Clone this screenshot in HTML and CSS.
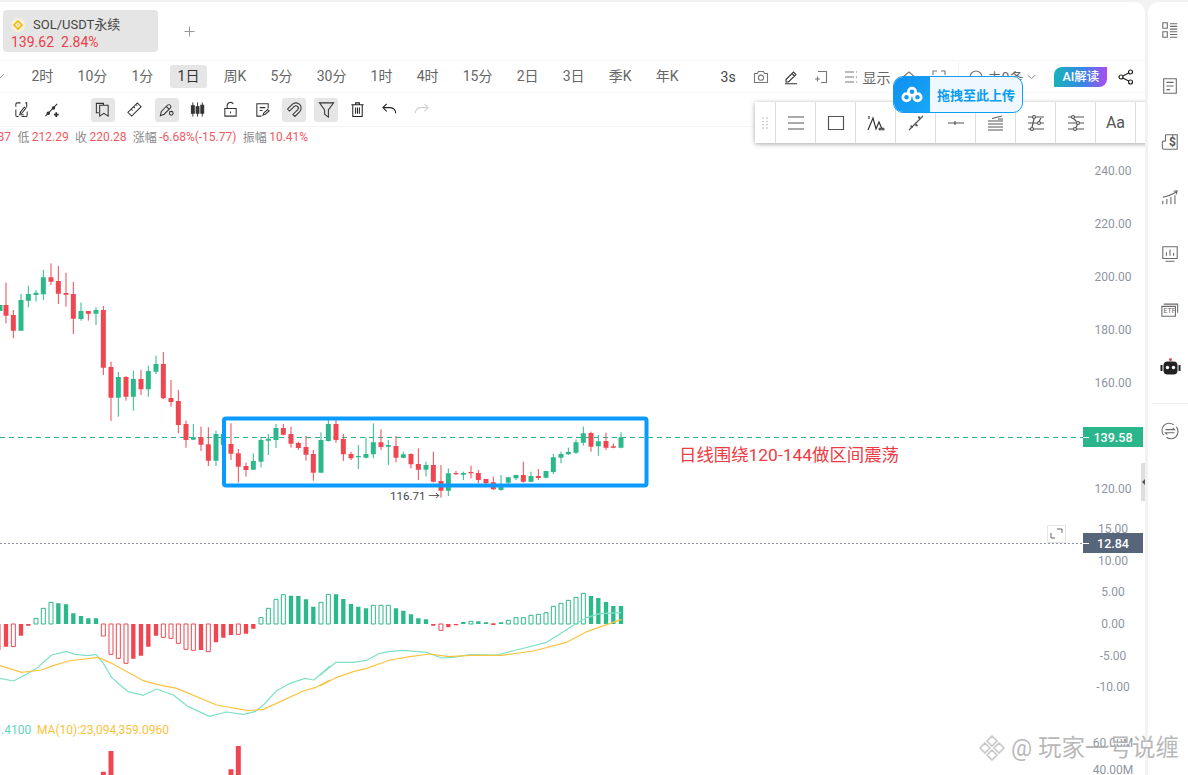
FILE: index.html
```html
<!DOCTYPE html>
<html lang="zh">
<head>
<meta charset="utf-8">
<title>SOL/USDT永续</title>
<link rel="stylesheet" href="styles.css">
</head>
<body>
<main class="main">
  <header class="tabs">
    <div class="tab">
      <div class="tab-name">
        <svg class="coin" viewBox="0 0 14 14"><circle cx="7" cy="7" r="7" fill="#f7f1dc"/><path d="M7 3 11 7 7 11 3 7z" fill="none" stroke="#f0b90b" stroke-width="1.6"/><path d="M7 6 8 7 7 8 6 7z" fill="#f0b90b"/></svg>
        <span>SOL/USDT永续</span>
      </div>
      <div class="tab-price"><span>139.62</span><span>2.84%</span></div>
    </div>
    <svg class="plus" viewBox="0 0 12 12"><path d="M6 .5v11M.5 6h11"/></svg>
  </header>

  <nav class="periods">
    <svg class="chev-left" viewBox="0 0 5 8"><path d="M-3 2 0 5 4 1"/></svg>
    <ul class="period-list">
      <li>2时</li><li>10分</li><li>1分</li><li class="on">1日</li><li>周K</li><li>5分</li><li>30分</li><li>1时</li><li>4时</li><li>15分</li><li>2日</li><li>3日</li><li>季K</li><li>年K</li>
    </ul>
    <div class="period-tools">
      <span class="sec">3s</span>
      <svg class="pi" viewBox="0 0 16 16"><path d="M1.5 4.5h3l1-2h5l1 2h3v9h-13z"/><circle cx="8" cy="8.7" r="2.6"/></svg>
      <svg class="pi dark" viewBox="0 0 16 16"><path d="M3 10.5 10.5 3l2.5 2.5L5.5 13H3zM9 4.5 11.5 7M2 14.8h12"/></svg>
      <svg class="pi" viewBox="0 0 16 16"><path d="M5 2.5h8.5v11H8M2 10h5M4.500 7.500v5"/></svg>
      <span class="show"><svg class="pi" viewBox="0 0 16 16"><path d="M2 3h9M2 8h9M2 13h9M13 3h1M13 8h1M13 13h1"/></svg><span>显示</span></span>
      <svg class="pi gap-a" viewBox="0 0 16 16"><path d="M2 8 8 3l6 5-6 5z"/></svg>
      <svg class="pi gap-b" viewBox="0 0 16 16"><path d="M2 6V2h4M10 2h4v4"/></svg>
      <span class="vsep"></span>
      <span class="alert"><svg class="pi" viewBox="0 0 16 16"><circle cx="8" cy="8" r="6"/></svg><span>未0条</span><svg class="chev" viewBox="0 0 10 6"><path d="M1 1l4 4 4-4"/></svg></span>
      <span class="ai">AI解读</span>
      <svg class="share" viewBox="0 0 16 16"><circle cx="12.500" cy="3" r="2"/><circle cx="3" cy="8" r="2"/><circle cx="12.500" cy="13" r="2"/><path d="M4.800 7 10.700 4M4.800 9l5.900 3"/></svg>
    </div>
  </nav>

  <div class="drawbar">
    <span class="dt"><svg viewBox="0 0 18 18"><path d="M3 6V3.500A1.500 1.500 0 0 1 4.500 2H8M3 9v6a1.500 1.500 0 0 0 1.500 1.500H6M13 2h1.500v5M15 11v4a1.500 1.500 0 0 1-1.500 1.500H9M8 11.500 12 6.500l1.500 1.200-4 5-2 .5zM6.500 14.500h5"/></svg></span>
    <span class="dt"><svg viewBox="0 0 18 18"><path d="M1.500 16 14 3"/><circle cx="4.500" cy="13" r="1.300" fill="#333"/><circle cx="10" cy="7.500" r="1.300" fill="#333"/><path d="M10.500 14.500h5M13 12v5" stroke-width="1.800"/></svg></span>
    <span class="dt push on"><svg viewBox="0 0 18 18"><path d="M5 12.500H2.500V2.500H10V4M6 4.500h9v11.500l-4.500-3L6 16z"/></svg></span>
    <span class="dt"><svg viewBox="0 0 18 18"><path d="M2 12 12 2l4 4L6 16zM5.500 8.500l1.500 1.500M8 6l1.500 1.500M10.500 3.500 12 5"/></svg></span>
    <span class="dt on"><svg viewBox="0 0 18 18"><path d="M2.500 15.500 3.500 11 10 4.500a2 2 0 0 1 3 3L6.500 14zM9 6l2.500 2.500"/><circle cx="14" cy="13" r="2"/></svg></span>
    <span class="dt"><svg viewBox="0 0 18 18"><path d="M3 1.500v15M8 1.500v15M13 1.500v15" stroke-width="1"/><path d="M1.500 5h3v8h-3zM6.500 6h3v7h-3zM11.500 4.500h3v8.500h-3z" fill="#333"/></svg></span>
    <span class="dt"><svg viewBox="0 0 18 18"><path d="M3 8h12v8H3zM5.500 8V5a3.500 3.500 0 0 1 6.500-1.800M9 11v2"/></svg></span>
    <span class="dt"><svg viewBox="0 0 18 18"><path d="M15 8V3H3v13h5M6 7h6M6 10h3M9.500 15l1-2.500 4-3.500 1.500 1.500-4 3.500z"/></svg></span>
    <span class="dt on"><svg viewBox="0 0 18 18"><path d="M1.600 8.600 6.600 3.600A5.500 5.500 0 0 1 14.400 11.400L9.400 16.400 7.300 14.300 12.300 9.300A2.500 2.500 0 0 0 8.700 5.700L3.700 10.700z"/></svg></span>
    <span class="dt on"><svg viewBox="0 0 18 18"><path d="M1.500 2h15L11 9.500V17l-4-3V9.500z"/></svg></span>
    <span class="dt"><svg viewBox="0 0 18 18"><path d="M2.500 4h13M7 4V2h4v2M4 4v12.500h10V4M7 7v6.500M9 7v6.500M11 7v6.500" stroke="#222"/></svg></span>
    <span class="dt"><svg viewBox="0 0 18 18"><path d="M6 3 2 7l4 4M2 7h8a5.500 5.500 0 0 1 5.500 6" stroke="#222"/></svg></span>
    <span class="dt"><svg viewBox="0 0 18 18"><path d="M12 3l4 4-4 4M16 7H8a5.500 5.500 0 0 0-5.500 6" stroke="#d0d0d0"/></svg></span>
  </div>

  <div class="ohlc">
    <span class="r">87</span><span>低</span><span class="r">212.29</span><span>收</span><span class="r">220.28</span><span>涨幅</span><span class="r">-6.68%(-15.77)</span><span>振幅</span><span class="r">10.41%</span>
  </div>

  <section class="chart">
    <svg class="plot" viewBox="0 146 1145 629">
      <path class="dash" d="M0 437.500H1083"/>
      <path class="dots" d="M0 543.500H1083"/>
      <g transform="translate(0 250) scale(.33333)">
        <path class="wick up" d="M63 132V242M85 107V172M108 120V155M130 60V150M243 158V212M288 172V225M355 366V500M400 362V482M445 347V440M468 317V372M580 522V570M648 542V648M670 545V600M760 610V659M783 560V652M805 553V615M828 522V594M963 547V668M985 510V575"/>
        <path class="body up" d="M0 165V183M63 150V242M85 132V152M108 128V135M130 82V133M243 183V207M288 180V191M355 381V443M400 387V440M445 363V418M468 342V365M580 562V569M648 552V632M670 552V585M760 633V659M783 570V635M805 566V572M828 534V570M963 570V668M985 522V573"/>
        <path class="wick dn" d="M18 98V220M40 180V265M153 40V105M175 48V162M198 68V170M220 96V252M265 183V212M310 168V375M333 335V513M378 378V452M423 360V435M490 306V447M513 390V470M535 420V550M558 512V593M603 530V603M625 532V648M693 520V630M715 597V698M738 638V680M850 522V556M873 530V593M895 575V600M918 558V632M940 600V692"/>
        <path class="body dn" d="M18 165V197M40 195V242M153 82V95M175 93V131M198 129V134M220 132V206M265 183V191M310 180V353M333 351V443M378 381V440M423 387V418M490 342V445M513 444V456M535 453V525M558 522V570M603 562V584M625 583V632M693 582V611M715 610V650M738 648V660M850 534V554M873 552V581M895 579V594M918 591V614M940 612V668"/>
      </g>
      <g transform="translate(320 400) scale(.33333)">
        <path class="wick up" d="M115 135V207M138 112V175M160 70V175M205 120V195M250 155V175M318 185V230M385 205V288M430 215V240M543 225V272M565 232V252M588 225V240M633 215V247M678 213V235M700 162V222M723 155V190M745 143V165M768 118V162M790 80V137M835 105V167M903 97V145"/>
        <path class="body up" d="M115 168V172M138 162V173M160 127V163M205 135V140M250 163V173M318 195V209M385 220V272M430 219V224M543 258V270M565 232V248M588 225V235M633 228V245M678 213V233M700 172V216M723 162V173M745 156V163M768 127V158M790 100V128M835 124V139M903 112V143"/>
        <path class="wick dn" d="M48 60V128M70 102V183M93 155V180M183 88V150M228 108V187M273 160V205M295 145V240M340 155V247M363 195V293M408 213V225M453 197V235M475 210V250M498 237V262M520 230V270M610 185V248M655 207V240M813 95V155M858 98V150M880 130V145"/>
        <path class="body dn" d="M48 72V120M70 117V163M93 162V175M183 127V141M228 138V173M273 162V193M295 192V209M340 195V245M363 243V272M408 219V223M453 216V220M475 219V240M498 237V250M520 247V268M610 225V245M655 228V234M813 99V140M858 123V143M880 139V143"/>
      </g>
      <g transform="translate(0 590) scale(.33333)">
        <path class="bar dn" d="M-5 102V180M18 102V170M63 102V137M85 102V107M400 102V206M423 102V197M445 102V170M468 102V137M603 102V180M648 102V157M670 102V143M693 102V135M738 102V131M760 102V116"/>
        <path class="bar up" d="M175 102V40M198 102V43M220 102V70M243 102V78M265 102V85M288 102V85M873 102V17M895 102V18M918 102V28M940 102V50"/>
        <path class="hollow dn" d="M34 102V170h12V102zM304 102V138h12V102zM327 102V193h12V102zM349 102V205h12V102zM372 102V220h12V102zM484 102V142h12V102zM507 102V145h12V102zM529 102V160h12V102zM552 102V178h12V102zM574 102V181h12V102zM619 102V185h12V102zM709 102V133h12V102z"/>
        <path class="hollow up" d="M102 102V85h12V102zM124 102V55h12V102zM147 102V37h12V102zM777 102V83h12V102zM799 102V55h12V102zM822 102V28h12V102zM844 102V14h12V102zM957 102V37h12V102z"/>
        <path class="line dif" d="M0 265 40 273 75 255 110 235 155 195 198 184 225 193 265 197 288 193 310 220 335 262 360 285 385 305 430 316 470 297 520 315 565 350 628 379 680 366 730 373 765 365 790 345 830 302 870 280 915 265 942 270 990 228"/>
        <path class="line dea" d="M0 227 65 247 125 240 160 227 205 213 295 202 335 220 430 272 470 283 530 295 650 345 745 362 790 358 910 303 945 293 990 270"/>
        <path class="body dn" d="M310 545V555M333 483V560M693 538V560M715 468V560"/>
      </g>
      <g transform="translate(320 590) scale(.33333)">
        <path class="bar up" d="M48 102V13M70 102V27M93 102V42M115 102V50M138 102V55M228 102V55M250 102V62M273 102V73M295 102V85M318 102V88M430 102V96M475 102V94M498 102V97M543 102V97M813 102V18M835 102V24M858 102V36M880 102V48M903 102V48"/>
        <path class="bar dn" d="M340 102V107M385 102V112M408 102V106M520 100V105"/>
        <path class="hollow up" d="M19 102V13h12V102zM154 102V46h12V102zM177 102V46h12V102zM199 102V46h12V102zM447 102V94h12V102zM559 102V91h12V102zM582 102V83h12V102zM604 102V83h12V102zM627 102V76h12V102zM649 102V73h12V102zM672 102V68h12V102zM694 102V49h12V102zM717 102V40h12V102zM739 102V31h12V102zM762 102V22h12V102zM784 102V10h12V102z"/>
        <path class="hollow dn" d="M357 102V121h12V102z"/>
        <path class="line dif" d="M0 256 48 217 100 217 140 211 180 190 210 184 250 181 320 187 365 204 400 202 450 194 530 195 590 180 680 157 770 100 800 83 840 71 903 68"/>
        <path class="line dea" d="M0 288 50 262 100 245 140 235 210 210 270 200 330 192 385 200 450 196 545 196 640 183 740 157 800 125 905 88"/>
      </g>
      <rect class="range" x="224" y="418.500" width="422.500" height="67" rx="2"/>
      <text class="note" x="679" y="461">日线围绕120-144做区间震荡</text>
      <text class="low" x="390" y="500">116.71 →</text>
      <text class="ma ma-a" x="1" y="734">.4100</text>
      <text class="ma ma-b" x="37" y="734">MA(10):23,094,359.0960</text>
      <g class="axis">
        <text x="1113" y="175">240.00</text><text x="1113" y="228">220.00</text><text x="1113" y="281">200.00</text><text x="1113" y="334">180.00</text><text x="1113" y="387">160.00</text><text x="1113" y="493">120.00</text><text x="1113" y="533">15.00</text><text x="1113" y="565">10.00</text><text x="1113" y="596">5.00</text><text x="1113" y="628">0.00</text><text x="1113" y="660">-5.00</text><text x="1113" y="691">-10.00</text><text x="1113" y="747">60.00M</text><text x="1113" y="774">40.00M</text>
      </g>
      <rect class="tag-g" x="1083" y="427" width="60" height="20"/>
      <rect class="tag-s" x="1083" y="533" width="60" height="20"/>
      <path class="tick" d="M1083 437.500h6M1083 543.500h6"/>
      <text class="tag" x="1113" y="441.500">139.58</text>
      <text class="tag" x="1113" y="547.500">12.84</text>
      <rect class="exp" x="1047.500" y="525.500" width="18" height="17"/>
      <path class="exp-i" d="M1051 533v5h4M1057 529h5v4"/>
    </svg>
  </section>

  <div class="float-bar">
    <span class="grip"><svg viewBox="0 0 6 12"><path d="M1 1h.01M5 1h.01M1 4.300h.01M5 4.300h.01M1 7.700h.01M5 7.700h.01M1 11h.01M5 11h.01"/></svg></span>
    <span class="fc"><svg viewBox="0 0 18 18"><path d="M1 3h16M1 9h16M1 15h16"/></svg></span>
    <span class="fc"><svg viewBox="0 0 18 18"><path d="M1.500 2.500h15v13h-15z"/></svg></span>
    <span class="fc"><svg viewBox="0 0 18 18"><path d="M1 16 6 4l3 11 3-7 3 7M2 2v3" stroke="#333"/><circle cx="13" cy="15" r="1" fill="#333"/><circle cx="16" cy="15" r="1" fill="#333"/></svg></span>
    <span class="fc"><svg viewBox="0 0 18 18"><path d="M2 16 16 2"/><path d="M5 14 4 11.500M8 10l2.500 2M13 5l-1.500-2.500" stroke-width="1.800"/></svg></span>
    <span class="fc"><svg viewBox="0 0 18 18"><path d="M1 9h16M8 7v4"/></svg></span>
    <span class="fc"><svg viewBox="0 0 18 18"><path d="M1 7h15M1 10h15M1 13h15M1 16h15M5 4.500 15 2M11 5h5" stroke-width="1"/></svg></span>
    <span class="fc"><svg viewBox="0 0 18 18"><path d="M1 3h4M9 3h8M1 9h9M14 9h3M1 15h2M7 15h10M7 4.500 5 13.500M12 7.500 14 4"/><circle cx="7" cy="3" r="1.500"/><circle cx="12" cy="9" r="1.500"/><circle cx="5" cy="15" r="1.500"/></svg></span>
    <span class="fc"><svg viewBox="0 0 18 18"><path d="M1 3h3M8 3h9M1 9h8M13 9h4M1 15h5M10 15h7M9 13.500l1.500-3M6.500 4.500 9.500 7.500"/><circle cx="6" cy="3" r="1.500"/><circle cx="11" cy="9" r="1.500"/><circle cx="8" cy="15" r="1.500"/></svg></span>
    <span class="fc fc-t">Aa</span>
    <span class="fc"></span>
  </div>

  <div class="upload">
    <span class="up-ic"><svg viewBox="0 0 24 18"><g fill="none" stroke="#fff" stroke-width="3"><circle cx="12" cy="6" r="4"/><circle cx="6" cy="12" r="4"/><circle cx="18" cy="12" r="4"/></g></svg></span>
    <span class="up-tx">拖拽至此上传</span>
  </div>

  <span class="collapse"></span>
</main>

<aside class="side">
  <svg class="si" viewBox="0 0 20 20"><path d="M2 2h5v6H2zM2 12h5v6H2zM10 3h8M10 6h8M10 9h8M10 12h8M10 15h8M10 18h8"/></svg>
  <svg class="si" viewBox="0 0 20 20"><path d="M3 2h14v16H3zM6 6h8M6 10h8M6 14h4"/></svg>
  <span class="si si-coin"><svg viewBox="0 0 20 20"><path d="M5 2h13v16H5M5 2 5 9M5 9H3a1.500 1.500 0 0 0-1.500 1.500V16A2 2 0 0 0 3.500 18H8"/></svg><b>$</b></span>
  <svg class="si" viewBox="0 0 20 20"><path d="M2 17v-4M6.500 17V11M11 17V9M15.500 17V7M2 9Q9 8 17.500 3M14 2.500l4-.5-1 4"/></svg>
  <svg class="si" viewBox="0 0 20 20"><path d="M2 2h16v13H2zM6 12V8M10 12V5M14 12V9M5 18h10"/></svg>
  <span class="si si-etf"><svg viewBox="0 0 20 20"><path d="M1 6h15v11H1zM3 3.500h15.500V13"/></svg><i>ETF</i></span>
  <svg class="si si-bot" viewBox="0 0 20 20"><circle cx="10" cy="2.500" r="1.500" fill="#e8424a"/><rect x="3" y="4.500" width="14" height="13" rx="4" fill="#222"/><rect x="0" y="8" width="2" height="6" fill="#222"/><rect x="18" y="8" width="2" height="6" fill="#222"/><circle cx="7" cy="10.500" r="1.700" fill="#fff"/><circle cx="13" cy="10.500" r="1.700" fill="#fff"/></svg>
  <span class="side-rule"></span>
  <svg class="si" viewBox="0 0 20 20"><path d="M3 14.500A8 8 0 0 1 14 3M17 5.500A8 8 0 0 1 6 17M5 8.500h10l-2-2M15 12H5l2 2"/></svg>
</aside>

<div class="watermark">
  <svg viewBox="0 0 28 28"><path d="M14 2 19 7 14 12 9 7zM7 9 12 14 7 19 2 14zM21 9 26 14 21 19 16 14zM14 16 19 21 14 26 9 21z" fill="none" stroke="#c9c9c9" stroke-width="1.600"/></svg>
  <span>@ 玩家一号说缠</span>
</div>
</body>
</html>
```
FILE: styles.css
```css
* { box-sizing: border-box; }
html, body { margin: 0; height: 100%; }
body {
  width: 1188px; height: 775px; overflow: hidden; position: relative;
  display: flex; padding-top: 2px; background: #f2f2f2;
  font-family: Roboto, "Noto Sans CJK SC", sans-serif; color: #666;
}
svg { display: block; }

.main {
  width: 1145px; height: 773px; position: relative; overflow: hidden;
  background: #fff; border-radius: 0 10px 0 0;
  display: flex; flex-direction: column;
}

.tabs { height: 58px; flex: none; display: flex; align-items: center; padding: 0 0 0 3px; }
.tab { width: 155px; height: 42px; background: #e5e5e5; border-radius: 4px; padding: 6px 0 0 8px; }
.tab-name { display: flex; align-items: center; gap: 8px; font-size: 13px; line-height: 17px; color: #444; }
.coin { width: 14px; height: 14px; flex: none; }
.tab-price { display: flex; gap: 7px; font-size: 14px; line-height: 19px; color: #ec3f4b; }
.plus { width: 11px; height: 11px; margin-left: 26px; fill: none; stroke: #999; stroke-width: 1.100; }

.periods {
  height: 32px; flex: none; border-top: 1px solid #f5f5f5; display: flex; align-items: center;
  font-size: 14px; color: #666; white-space: nowrap;
}
.chev-left { width: 5px; height: 8px; fill: none; stroke: #999; flex: none; }
.period-list { list-style: none; margin: 0 0 0 18.500px; padding: 0; display: flex; gap: 8.200px; }
.period-list li { padding: 0 8px; height: 23px; line-height: 23px; border-radius: 3px; white-space: nowrap; }
.period-list .on { background: #e6e6e6; color: #333; }
.period-tools { display: flex; align-items: center; margin-left: 34px; height: 100%; }
.sec { width: 16px; color: #444; }
.pi { width: 16px; height: 16px; fill: none; stroke: #777; stroke-width: 1.100; flex: none; margin-left: 14px; }
.period-tools .sec + .pi { margin-left: 16px; }
.pi.dark { stroke: #333; }
.show { display: flex; align-items: center; gap: 4px; }
.show .pi { margin-left: 14px; }
.pi.gap-a { margin-left: 10px; }
.pi.gap-b { margin-left: 14px; }
.vsep { width: 1px; height: 100%; background: #f2f2f2; margin-left: 11px; }
.alert { display: flex; align-items: center; gap: 4px; }
.alert .pi { margin-left: 9px; }
.chev { width: 9px; height: 6px; fill: none; stroke: #888; stroke-width: 1.100; flex: none; }
.ai {
  width: 53px; height: 20px; line-height: 20px; margin-left: 18px; text-align: center; color: #fff; font-size: 12.500px; font-weight: 500;
  border-radius: 8px 0 8px 0; background: linear-gradient(90deg, #17b3b8, #3a86e8 55%, #a84df0);
}
.share { width: 16px; height: 16px; margin-left: 11px; fill: none; stroke: #222; stroke-width: 1.200; flex: none; }

.drawbar { height: 34px; flex: none; border-top: 1px solid #f5f5f5; display: flex; align-items: center; gap: 7.900px; padding-left: 9px; }
.dt { width: 24px; height: 24px; border-radius: 3px; display: flex; align-items: center; justify-content: center; flex: none; }
.dt svg { width: 17px; height: 17px; fill: none; stroke: #333; stroke-width: 1.100; }
.dt.on { background: #e6e6e6; }
.dt.push { margin-left: 18px; }

.ohlc { height: 20px; flex: none; border-top: 1px solid #f5f5f5; display: flex; align-items: center; gap: 2.400px; margin-left: -2.500px; font-size: 12px; color: #8a8a8a; white-space: nowrap; }
.ohlc .r { color: #ee5a64; margin-right: 4px; }

.chart { flex: 1; position: relative; min-height: 0; }
.plot { width: 1145px; height: 629px; }
.dash { stroke: #2ab58a; stroke-dasharray: 5 4; stroke-width: 1; fill: none; }
.dots { stroke: #8a94a3; stroke-dasharray: 2 2; stroke-width: 1; fill: none; }
.wick { fill: none; stroke-width: 3; }
.body { fill: none; stroke-width: 15; }
.bar { fill: none; stroke-width: 13; }
.hollow { fill: #fff; stroke-width: 3; }
.line { fill: none; stroke-width: 3.600; stroke-linejoin: round; }
.up { stroke: #2db88c; }
.dn { stroke: #ee4752; }
.dif { stroke: #7fe0c8; }
.dea { stroke: #f9c440; }
.range { fill: none; stroke: #0b9bff; stroke-width: 4; }
.note { font-size: 17.400px; fill: #ee3b43; }
.low { font-size: 11.500px; fill: #444; }
.ma { font-size: 12px; }
.ma-a { fill: #5fd6bd; }
.ma-b { fill: #f8c33c; }
.axis text { font-size: 12px; fill: #8f96a0; text-anchor: middle; }
.tag-g { fill: #2ab58a; }
.tag-s { fill: #56657a; }
.tag { font-size: 12.500px; fill: #fff; text-anchor: middle; font-weight: 500; }
.tick { stroke: #fff; stroke-width: 1; }
.exp { fill: #fff; stroke: #e5e5e5; stroke-width: 1; }
.exp-i { fill: none; stroke: #666; stroke-width: 1; }

.float-bar {
  position: absolute; left: 755px; top: 100px; width: 420px; height: 41px; background: #fff;
  box-shadow: 0 1px 5px rgba(0, 0, 0, .35); display: flex; z-index: 2;
}
.grip { width: 20px; flex: none; display: flex; align-items: center; justify-content: center; }
.grip svg { width: 6px; height: 12px; fill: none; stroke: #999; stroke-width: 1.300; stroke-linecap: round; }
.fc { width: 40px; flex: none; border-left: 1px solid #ddd; display: flex; align-items: center; justify-content: center; font-size: 16px; color: #555; }
.fc svg { width: 18px; height: 18px; fill: none; stroke: #555; stroke-width: 1.200; }

.upload {
  position: absolute; left: 893px; top: 74px; width: 130px; height: 37px; z-index: 3;
  display: flex; align-items: center; border: 1px solid #159bf2; border-radius: 10px;
  background: #eef8fe; overflow: hidden;
}
.up-ic { width: 36px; height: 100%; flex: none; background: linear-gradient(135deg, #0f8ff0, #18a8f8); display: flex; align-items: center; justify-content: center; }
.up-ic svg { width: 22px; height: 17px; }
.up-tx { margin-left: 7px; font-size: 13px; font-weight: 700; color: #0a9cf0; white-space: nowrap; }

.collapse {
  position: absolute; left: 1141px; top: 461px; width: 5px; height: 38px; background: #dedede;
}
.collapse::after {
  content: ""; position: absolute; left: 1px; top: 15px;
  border: 4px solid transparent; border-right-color: #555; border-left-width: 0;
}

.side {
  width: 40px; height: 773px; margin-left: 3px; flex: none; background: #fff; border-radius: 10px 0 0 0;
  display: flex; flex-direction: column; align-items: center; padding: 19px 0 0 4px;
}
.si { width: 18px; height: 18px; flex: none; margin-bottom: 38px; position: relative; display: block; }
svg.si, .si svg { fill: none; stroke: #6b6b6b; stroke-width: 1.200; }
.si svg { width: 18px; height: 18px; }
.si-coin b { position: absolute; left: 8px; top: 1px; font-size: 12px; line-height: 16px; color: #555; }
.si-etf i { position: absolute; left: 2.500px; top: 6px; font-size: 7px; line-height: 8px; font-style: normal; color: #666; }
.si-bot { width: 21px; height: 20px; margin-bottom: 0; }
svg.si-bot { stroke: none; }
.side-rule { width: 36px; height: 1px; background: #eee; margin: 26px 0 18px 0; flex: none; }

.watermark {
  position: absolute; left: 978px; top: 733px; display: flex; align-items: center; gap: 5px;
  font-size: 23.500px; line-height: 30px; color: rgba(165, 165, 165, .8); white-space: nowrap;
  text-shadow: 1px 1px 1px rgba(255, 255, 255, .9);
}
.watermark svg { width: 28px; height: 28px; flex: none; }
```
